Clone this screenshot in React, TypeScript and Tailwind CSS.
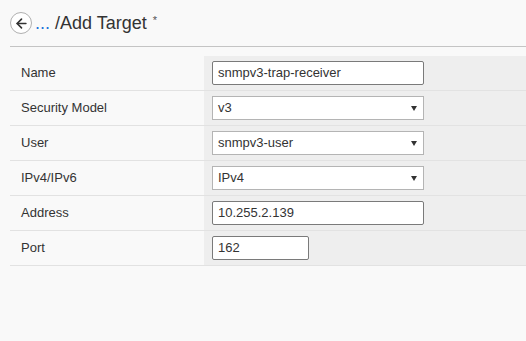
import { ArrowLeft } from 'lucide-react';

const rows = [
  { label: 'Name', value: 'snmpv3-trap-receiver', kind: 'input', width: 'w-[212px]' },
  { label: 'Security Model', value: 'v3', kind: 'select', width: 'w-[212px]' },
  { label: 'User', value: 'snmpv3-user', kind: 'select', width: 'w-[212px]' },
  { label: 'IPv4/IPv6', value: 'IPv4', kind: 'select', width: 'w-[212px]' },
  { label: 'Address', value: '10.255.2.139', kind: 'input', width: 'w-[212px]' },
  { label: 'Port', value: '162', kind: 'input', width: 'w-[97px]' },
];

export default function App() {
  return (
    <div className="w-[526px] h-[341px] bg-[#f9f9f9] text-[#333] font-['Liberation_Sans',Arial,sans-serif] overflow-hidden">
      {/* Header */}
      <div className="flex items-center h-[44px] pl-[10px] pt-[2px]">
        <button className="w-[22px] h-[22px] rounded-full border border-[#b0b0b0] bg-white flex items-center justify-center">
          <ArrowLeft size={15} strokeWidth={2.6} className="text-[#333]" />
        </button>
        <span className="ml-[3px] text-[18px] text-[#1a73d9] leading-none">...</span>
        <span className="ml-[5px] text-[18px] text-[#333] leading-none">/Add Target</span>
        <span className="ml-[6px] text-[11px] text-[#555] self-start mt-[10px]">*</span>
      </div>
      <div className="ml-[10px] border-t border-[#c4c4c4] mt-[2px]" />

      {/* Form */}
      <div className="ml-[10px] mt-[9px]">
        {rows.map((row) => (
          <div key={row.label} className="flex h-[35px] border-b border-[#e2e2e2]">
            <div className="w-[194px] pl-[11px] flex items-center text-[13px]">{row.label}</div>
            <div className="flex-1 bg-[#eeeeee] pl-[8px] flex items-center">
              {row.kind === 'input' ? (
                <div className={`${row.width} h-[24px] bg-white border border-[#7a7a7a] rounded-[2px] px-[5px] flex items-center text-[13px]`}>
                  {row.value}
                </div>
              ) : (
                <div className="w-[212px] h-[24px] bg-white border border-[#b4b4b4] pl-[5px] pr-[6px] flex items-center justify-between text-[13px]">
                  <span>{row.value}</span>
                  <svg width="6" height="5" viewBox="0 0 6 5" className="text-[#333]">
                    <path d="M0 0 H6 L3 5 Z" fill="currentColor" />
                  </svg>
                </div>
              )}
            </div>
          </div>
        ))}
      </div>
    </div>
  );
}
